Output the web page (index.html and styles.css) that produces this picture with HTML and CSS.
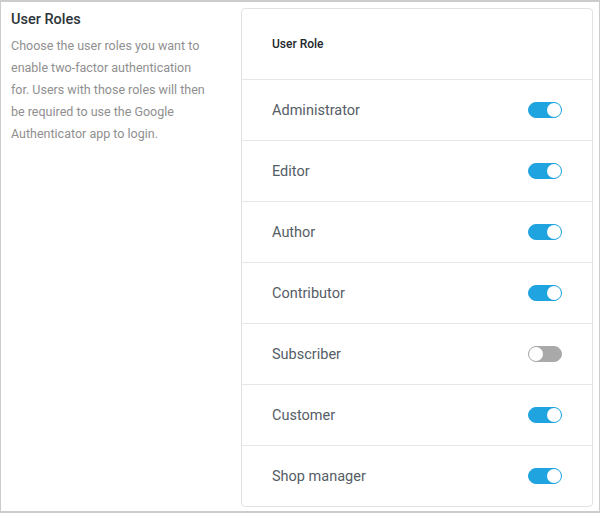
FILE: index.html
```html
<!DOCTYPE html>
<html>

<head>
    <meta charset="UTF-8">
    <title>User Roles</title>
    <link rel="stylesheet" href="styles.css">
</head>

<body>

    <div id="all">
        <div class="side">
            <div class="side_title">User Roles</div>
            <div class="side_desc">Choose the user roles you want to enable two-factor authentication for. Users with those roles will then be required to use the Google Authenticator app to login.</div>
        </div>

        <div class="card">
            <div class="card_head">User Role</div>
            <div class="row">
                <div class="role">Administrator</div>
                <div class="toggle on"></div>
            </div>
            <div class="row">
                <div class="role">Editor</div>
                <div class="toggle on"></div>
            </div>
            <div class="row">
                <div class="role">Author</div>
                <div class="toggle on"></div>
            </div>
            <div class="row">
                <div class="role">Contributor</div>
                <div class="toggle on"></div>
            </div>
            <div class="row">
                <div class="role">Subscriber</div>
                <div class="toggle"></div>
            </div>
            <div class="row">
                <div class="role">Customer</div>
                <div class="toggle on"></div>
            </div>
            <div class="row">
                <div class="role">Shop manager</div>
                <div class="toggle on"></div>
            </div>
        </div>
    </div>

</body>

</html>
```

FILE: styles.css
```css
* {
    box-sizing: border-box;
}

body {
    margin: 0;
    font-family: Roboto, "Liberation Sans", sans-serif;
    background: #fff;
}

#all {
    width: 600px;
    height: 513px;
    border: 1px solid #cccccc;
    border-top-width: 2px;
    border-bottom-width: 2px;
    display: flex;
    padding: 6px 6px 4px 10px;
}

.side {
    width: 230px;
    padding-top: 2px;
}

.side_title {
    font-size: 14.5px;
    font-weight: 500;
    color: #2c3338;
    line-height: 20px;
    margin-bottom: 5px;
}

.side_desc {
    font-size: 12.5px;
    color: #8f8f8f;
    line-height: 22px;
    padding-right: 34px;
}

.card {
    width: 352px;
    height: 499px;
    border: 1px solid #e2e2e2;
    border-radius: 4px;
    display: flex;
    flex-direction: column;
}

.card_head {
    height: 70px;
    flex-shrink: 0;
    padding-left: 30px;
    display: flex;
    align-items: center;
    font-size: 12px;
    font-weight: 500;
    color: #23282d;
}

.row {
    height: 61px;
    flex-shrink: 0;
    border-top: 1px solid #e6e6e6;
    display: flex;
    align-items: center;
    justify-content: space-between;
    padding: 0 30px 0 30px;
}

.role {
    font-size: 14.5px;
    color: #555d66;
}

.toggle {
    width: 34px;
    height: 16px;
    border-radius: 8px;
    background: #a9a9a9;
    border: 1px solid #a9a9a9;
    position: relative;
}

.toggle::after {
    content: "";
    position: absolute;
    top: 0;
    left: 0;
    width: 14px;
    height: 14px;
    border-radius: 50%;
    background: #fff;
}

.toggle.on {
    background: #1fa4e0;
    border-color: #1fa4e0;
}

.toggle.on::after {
    left: auto;
    right: 0;
}
```
